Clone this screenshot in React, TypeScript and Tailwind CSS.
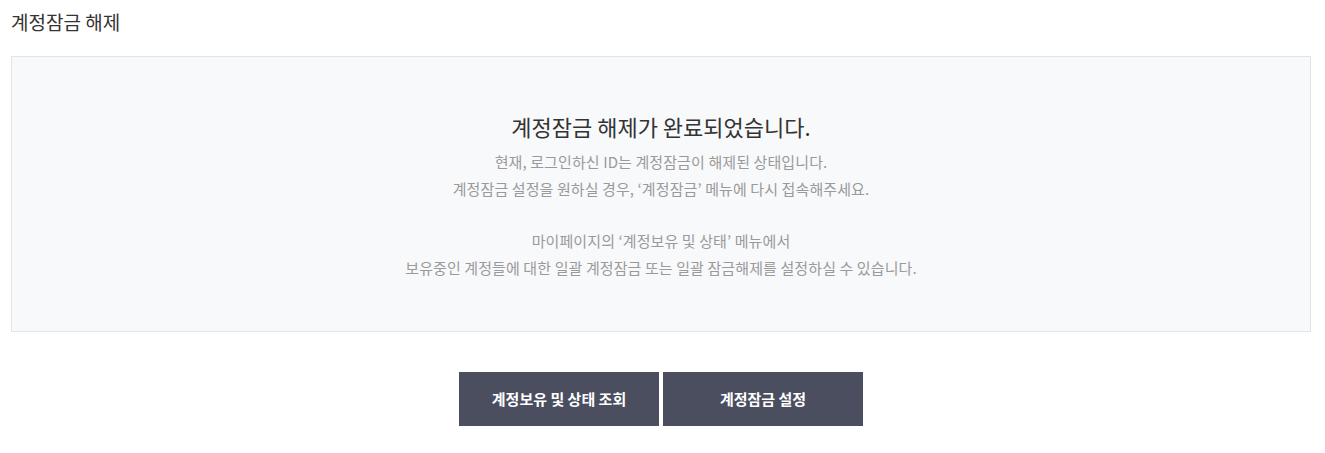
export default function App() {
  return (
    <div
      className="min-h-screen bg-white pl-[11px] pr-[14px] pt-[9px]"
      style={{ fontFamily: '"Noto Sans CJK KR", "Noto Sans", sans-serif' }}
    >
      {/* Page title */}
      <h2 className="text-[19px] leading-[26px] font-normal text-[#333333]">계정잠금 해제</h2>

      {/* Result box */}
      <div className="mt-[21px] h-[276px] border border-[#e1e4ea] bg-[#f8f9fa] flex flex-col items-center pt-[52px]">
        <p className="text-[22px] leading-[34px] text-[#333333]">계정잠금 해제가 완료되었습니다.</p>
        <div className="mt-[6px] text-[15px] leading-[26.5px] tracking-[0.1px] text-[#9a9a9a] text-center">
          <p>현재, 로그인하신 ID는 계정잠금이 해제된 상태입니다.</p>
          <p>계정잠금 설정을 원하실 경우, ‘계정잠금’ 메뉴에 다시 접속해주세요.</p>
          <p className="mt-[26px]">마이페이지의 ‘계정보유 및 상태’ 메뉴에서</p>
          <p>보유중인 계정들에 대한 일괄 계정잠금 또는 일괄 잠금해제를 설정하실 수 있습니다.</p>
        </div>
      </div>

      {/* Buttons */}
      <div className="mt-[40px] flex justify-center gap-[4px]">
        <button className="w-[200px] h-[54px] bg-[#4a4e5f] text-white text-[15px] font-bold">
          계정보유 및 상태 조회
        </button>
        <button className="w-[200px] h-[54px] bg-[#4a4e5f] text-white text-[15px] font-bold">
          계정잠금 설정
        </button>
      </div>
    </div>
  );
}
